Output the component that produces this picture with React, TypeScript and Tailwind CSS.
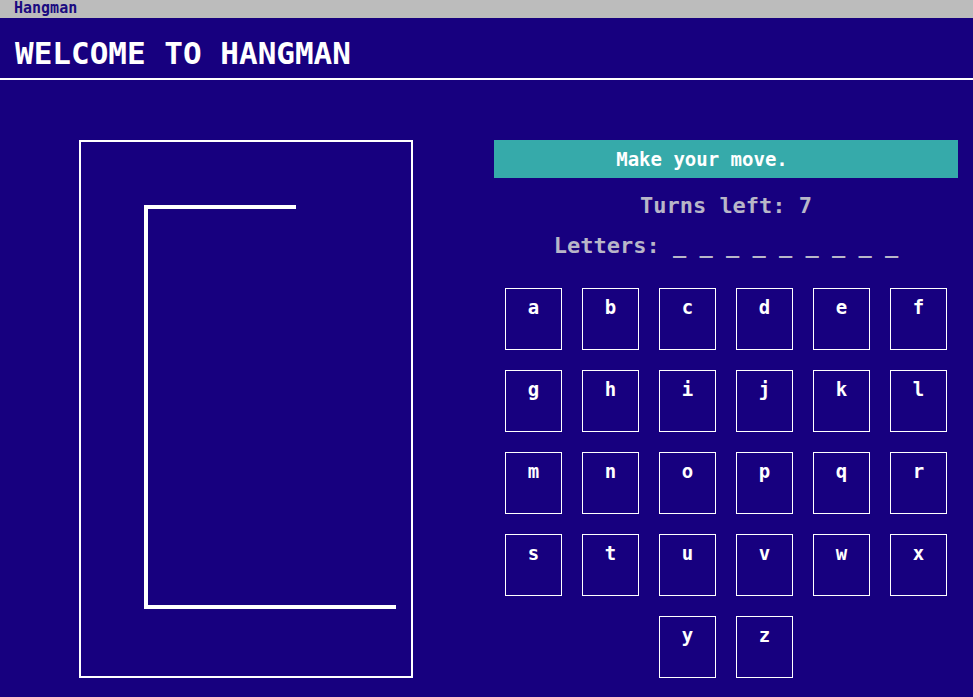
export default function App() {
  const letters = "abcdefghijklmnopqrstuvwxyz".split("");

  return (
    <div className="min-h-[697px] w-full bg-[#17007f] font-['DejaVu_Sans_Mono',monospace] font-bold">
      {/* title bar */}
      <div className="h-[18px] bg-[#bcbcbc] pl-[14px] text-[15px] leading-[17px] text-[#1a0a80]">
        Hangman
      </div>

      {/* header */}
      <div className="h-[62px] border-b-2 border-white pl-[15px] pt-[20px]">
        <h1 className="text-[31px] leading-[30px] text-white">WELCOME TO HANGMAN</h1>
      </div>

      <div className="flex items-start pl-[79px] pt-[60px]">
        {/* gallows */}
        <div className="h-[538px] w-[334px] border-2 border-white">
          <svg width="330" height="534" viewBox="0 0 330 534">
            <path
              d="M215 65 H65 V465 H315"
              fill="none"
              stroke="white"
              strokeWidth="4"
              strokeLinejoin="miter"
            />
          </svg>
        </div>

        {/* game panel */}
        <div className="ml-[81px] flex w-[464px] flex-col items-center">
          <div className="h-[38px] w-full bg-[#36aaaa] pr-[48px] text-center text-[19px] leading-[38px] text-white">
            Make your move.
          </div>
          <div className="mt-[16px] text-[22px] leading-[24px] text-[#b8b6c8]">
            Turns left: 7
          </div>
          <div className="mt-[16px] text-[22px] leading-[24px] text-[#b8b6c8]">
            Letters: _ _ _ _ _ _ _ _ _
          </div>
          <div className="mt-[30px] flex w-[442px] flex-wrap justify-center gap-x-[20px] gap-y-[20px]">
            {letters.map((l) => (
              <button
                key={l}
                className="flex h-[62px] w-[57px] justify-center border border-white pt-[9px] text-[19px] leading-[19px] text-white"
              >
                {l}
              </button>
            ))}
          </div>
        </div>
      </div>
    </div>
  );
}
